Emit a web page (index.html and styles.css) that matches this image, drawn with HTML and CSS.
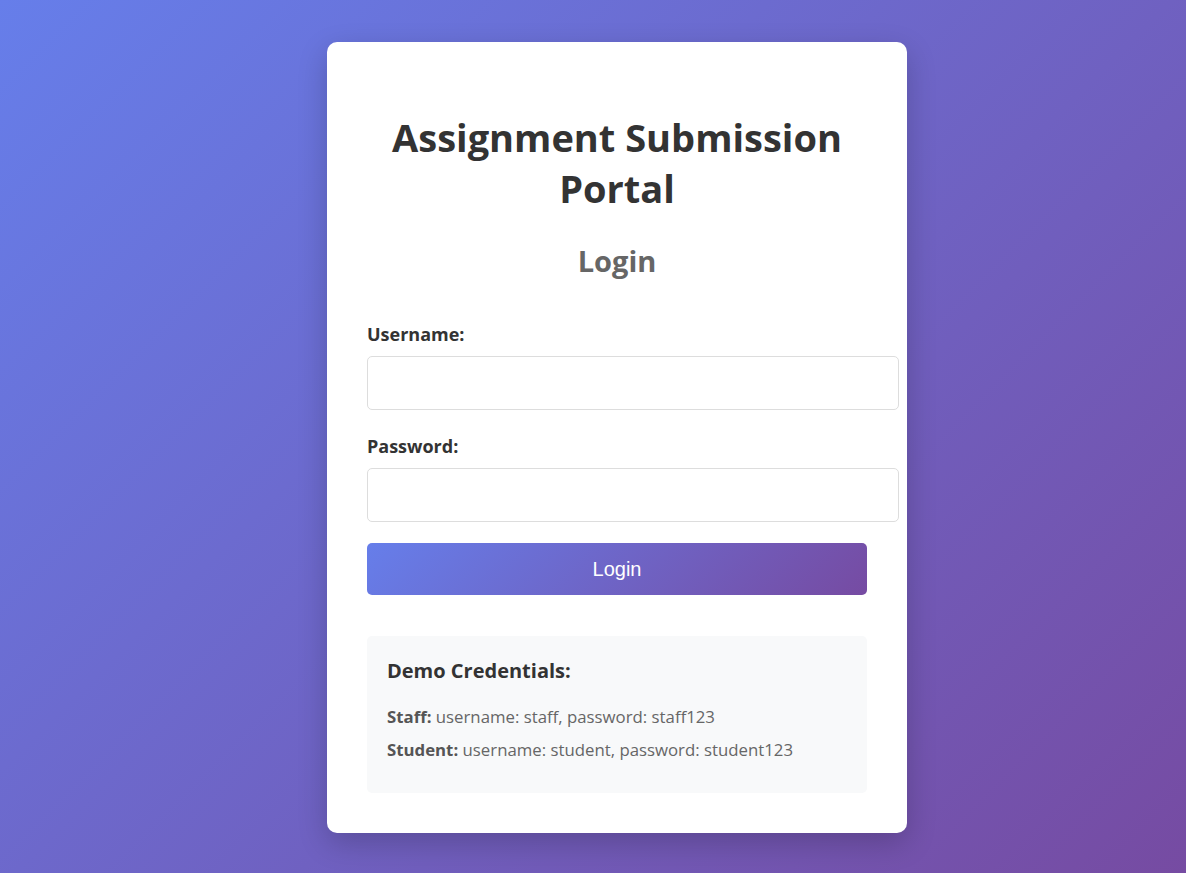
FILE: index.html
```html
<!DOCTYPE html>
<html lang="en">
<head>
<meta charset="UTF-8">
<title>Assignment Submission Portal - Login</title>
<link rel="stylesheet" href="styles.css">
</head>
<body>
<div class="card">
  <h1 class="title">Assignment Submission Portal</h1>
  <h2 class="subtitle">Login</h2>
  <form class="login-form">
    <div class="form-group">
      <label class="form-label" for="username">Username:</label>
      <input class="form-input" type="text" id="username" name="username">
    </div>
    <div class="form-group">
      <label class="form-label" for="password">Password:</label>
      <input class="form-input" type="password" id="password" name="password">
    </div>
    <button class="btn-login" type="button">Login</button>
  </form>
  <div class="demo-box">
    <h3 class="demo-title">Demo Credentials:</h3>
    <p class="demo-line"><strong>Staff:</strong> username: staff, password: staff123</p>
    <p class="demo-line"><strong>Student:</strong> username: student, password: student123</p>
  </div>
</div>
</body>
</html>
```
FILE: styles.css
```css
* { box-sizing: content-box; }
html, body { height: 100%; }
body {
  margin: 0;
  padding: 2px 0 0 48px;
  box-sizing: border-box;
  min-height: 100vh;
  display: flex;
  align-items: center;
  justify-content: center;
  background: linear-gradient(135deg, #667eea 0%, #764ba2 100%);
  font-family: "Open Sans", "Noto Sans", sans-serif;
  color: #333;
}
.card {
  width: 500px;
  padding: 40px;
  background: #fff;
  border-radius: 10px;
  box-shadow: 0 10px 30px rgba(0, 0, 0, 0.2);
}
.title {
  margin: 30px 0 28px;
  font-size: 38px;
  line-height: 51px;
  font-weight: 700;
  text-align: center;
  color: #333;
}
.subtitle {
  margin: 0 0 40px;
  font-size: 29px;
  line-height: 38px;
  font-weight: 700;
  text-align: center;
  color: #666;
}
.login-form { margin: 0; }
.form-group { margin-bottom: 22px; }
.form-group:last-of-type { margin-bottom: 21px; }
.form-label {
  display: block;
  margin-bottom: 8px;
  font-size: 18px;
  line-height: 28px;
  font-weight: 700;
  color: #333;
}
.form-input {
  display: block;
  width: 100%;
  height: 22px;
  padding: 15px;
  border: 1px solid #ddd;
  border-radius: 5px;
  font-size: 16px;
  font-family: inherit;
  background: #fff;
  outline: none;
}
.btn-login {
  display: block;
  width: 100%;
  box-sizing: border-box;
  height: 52px;
  padding: 0;
  border: none;
  border-radius: 5px;
  background: linear-gradient(135deg, #667eea 0%, #764ba2 100%);
  color: #fff;
  font-family: "Liberation Sans", Arial, sans-serif;
  font-size: 20px;
  line-height: 52px;
  cursor: pointer;
}
.demo-box {
  margin-top: 41px;
  padding: 20px 20px 22px;
  background: #f8f9fa;
  border-radius: 5px;
}
.demo-title {
  margin: 0 0 19px;
  font-size: 20px;
  line-height: 30px;
  font-weight: 700;
  color: #333;
}
.demo-line {
  margin: 0 0 10px;
  font-size: 16.8px;
  line-height: 23px;
  color: #666;
}
.demo-line strong { color: #555; }
```
